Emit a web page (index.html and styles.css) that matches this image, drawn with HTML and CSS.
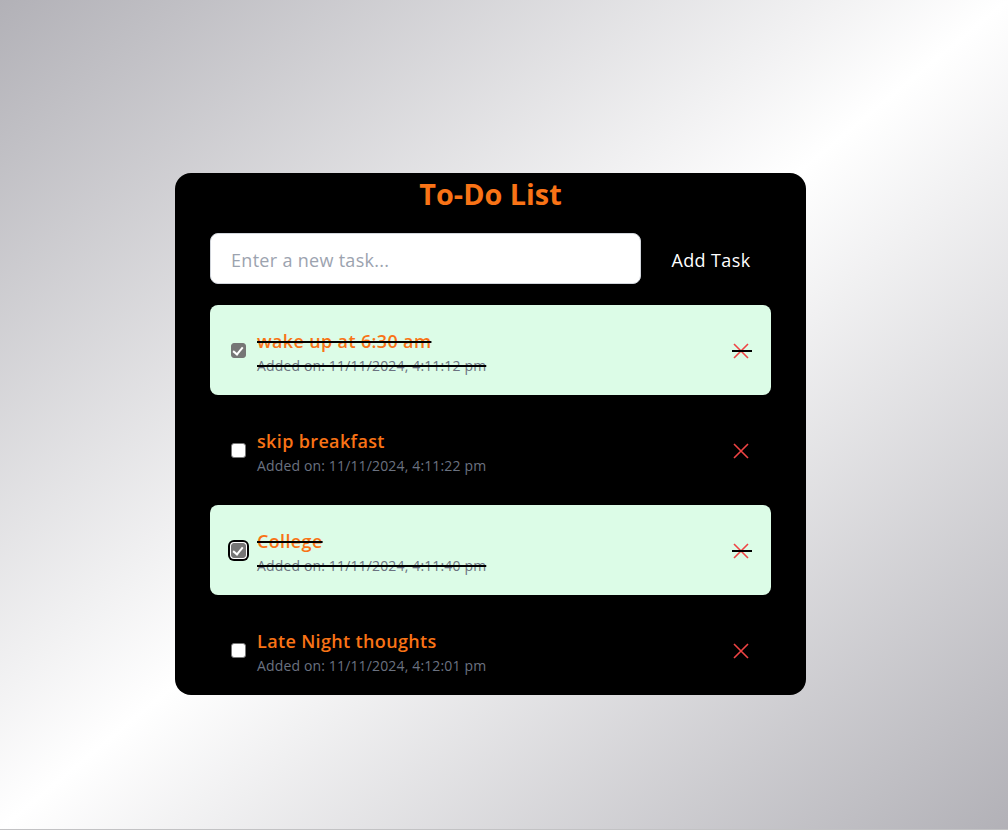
FILE: index.html
```html
<!DOCTYPE html>
<html lang="en">
<head>
<meta charset="utf-8">
<title>To-Do List</title>
<link rel="stylesheet" href="styles.css">
</head>
<body>
<main class="card">
  <h1 class="title">To-Do List</h1>
  <form class="add-row">
    <input class="task-input" type="text" placeholder="Enter a new task...">
    <button class="add-btn" type="button">Add Task</button>
  </form>
  <ul class="list">
    <li class="item done">
      <span class="check checked"></span>
      <div class="text">
        <div class="name">wake up at 6:30 am</div>
        <div class="date">Added on: 11/11/2024, 4:11:12 pm</div>
      </div>
      <span class="del"><svg viewBox="0 0 16 16" width="16" height="16"><path d="M1 1L15 15M15 1L1 15" stroke="#ef4444" stroke-width="1.6" fill="none"/></svg></span>
    </li>
    <li class="item">
      <span class="check"></span>
      <div class="text">
        <div class="name">skip breakfast</div>
        <div class="date">Added on: 11/11/2024, 4:11:22 pm</div>
      </div>
      <span class="del"><svg viewBox="0 0 16 16" width="16" height="16"><path d="M1 1L15 15M15 1L1 15" stroke="#ef4444" stroke-width="1.6" fill="none"/></svg></span>
    </li>
    <li class="item done">
      <span class="check checked focused"></span>
      <div class="text">
        <div class="name">College</div>
        <div class="date">Added on: 11/11/2024, 4:11:40 pm</div>
      </div>
      <span class="del"><svg viewBox="0 0 16 16" width="16" height="16"><path d="M1 1L15 15M15 1L1 15" stroke="#ef4444" stroke-width="1.6" fill="none"/></svg></span>
    </li>
    <li class="item">
      <span class="check"></span>
      <div class="text">
        <div class="name">Late Night thoughts</div>
        <div class="date">Added on: 11/11/2024, 4:12:01 pm</div>
      </div>
      <span class="del"><svg viewBox="0 0 16 16" width="16" height="16"><path d="M1 1L15 15M15 1L1 15" stroke="#ef4444" stroke-width="1.6" fill="none"/></svg></span>
    </li>
  </ul>
</main>
</body>
</html>
```

FILE: styles.css
```css
html {
  background: #c2c2c4;
  height: 830px;
}
body {
  margin: 0;
  height: 829px;
  box-sizing: border-box;
  padding: 173px 0 0 175px;
  background: linear-gradient(to bottom right, #b2b1b7 0%, #ffffff 50%, #b2b1b7 100%);
  font-family: "Open Sans", "Noto Sans", sans-serif;
}
.card {
  width: 631px;
  height: 522px;
  box-sizing: border-box;
  background: #000;
  border-radius: 16px;
  padding: 1px 35px 0;
  display: flex;
  flex-direction: column;
  overflow: hidden;
}
.title {
  margin: 0;
  text-align: center;
  color: #f97316;
  font-size: 28.8px;
  line-height: 40px;
  font-weight: 700;
}
.add-row {
  display: flex;
  gap: 10px;
  margin: 19px 0 0;
}
.task-input {
  width: 431px;
  height: 51px;
  box-sizing: border-box;
  border: 1px solid #d1d5db;
  border-radius: 8px;
  padding: 2px 20px 0;
  font-family: inherit;
  font-size: 18px;
  letter-spacing: 0.3px;
  color: #111;
  background: #fff;
  outline: none;
}
.task-input::placeholder {
  color: #9ca3af;
}
.add-btn {
  width: 120px;
  background: transparent;
  border: 0;
  color: #fff;
  font-family: inherit;
  font-size: 18px;
  letter-spacing: 0.4px;
  padding: 2px 0 0;
}
.list {
  list-style: none;
  margin: 21px 0 0;
  padding: 0;
  display: flex;
  flex-direction: column;
  gap: 10px;
}
.item {
  height: 90px;
  box-sizing: border-box;
  display: flex;
  align-items: center;
  padding: 0 21px 0 21px;
  border-radius: 8px;
  color: #000;
}
.item.done {
  background: #dcfce7;
  text-decoration: line-through;
  text-decoration-thickness: 2px;
  text-decoration-color: #000;
}
.check {
  width: 15px;
  height: 15px;
  box-sizing: border-box;
  border: 1px solid #767676;
  border-radius: 3px;
  background: #fff;
  flex: none;
  margin-right: 11px;
  position: relative;
}
.check.checked {
  background: #767676;
  border-color: #767676;
}
.check.checked::after {
  content: "";
  position: absolute;
  left: 3px;
  top: 1px;
  width: 4px;
  height: 8px;
  border: solid #fff;
  border-width: 0 2px 2px 0;
  transform: rotate(40deg);
}
.check.focused {
  box-shadow: 0 0 0 1px #fff, 0 0 0 3px #000;
}
.text {
  flex: 1;
  display: flex;
  flex-direction: column;
  padding-top: 4px;
}
.name {
  color: #f97316;
  font-size: 18px;
  font-weight: 600;
  line-height: 27px;
  letter-spacing: 0.35px;
}
.date {
  color: #6b7280;
  font-size: 14px;
  line-height: 21px;
  letter-spacing: 0.15px;
}
.del {
  width: 16px;
  height: 16px;
  display: flex;
  position: relative;
  margin: 2px 1px 0 0;
}
.done .del::after {
  content: "";
  position: absolute;
  left: -1px;
  right: -3px;
  top: 7px;
  height: 2px;
  background: #000;
}
```
